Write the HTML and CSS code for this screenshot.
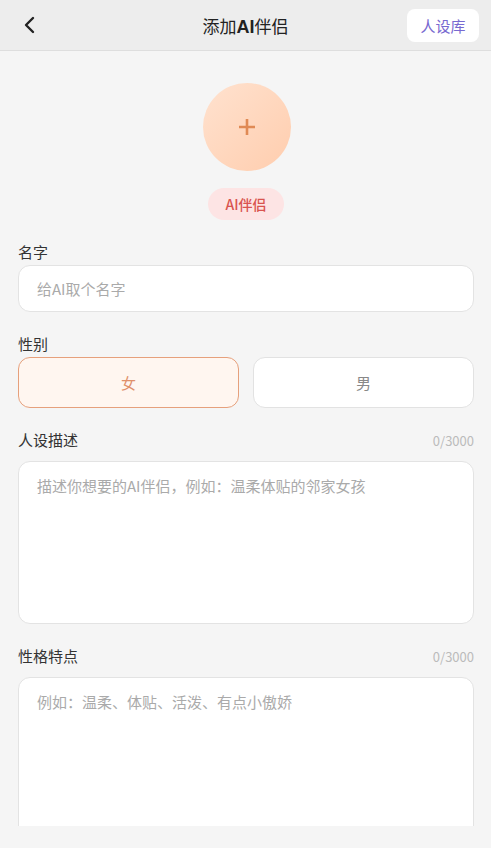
FILE: index.html
```html
<html>
<head>
    <meta charset="utf-8">
    <title>添加AI伴侣</title>
    <link rel="stylesheet" href="styles.css">
</head>
<body>
    <div class="header">
        <div class="back">
            <svg width="14" height="18" viewBox="0 0 14 18"><path d="M10 2 L3 9 L10 16" fill="none" stroke="#222" stroke-width="2.4" stroke-linecap="round" stroke-linejoin="round"/></svg>
        </div>
        <div class="title">添加<b>AI</b>伴侣</div>
        <div class="lib-btn">人设库</div>
    </div>

    <div class="content">
        <div class="avatar-box">
            <div class="avatar">
                <svg width="18" height="18" viewBox="0 0 18 18"><path d="M9 1 V17 M1 9 H17" stroke="#e08a55" stroke-width="2.6"/></svg>
            </div>
            <div class="badge">AI伴侣</div>
        </div>

        <div class="field">
            <div class="label">名字</div>
            <input class="text-input" type="text" placeholder="给AI取个名字">
        </div>

        <div class="field">
            <div class="label">性别</div>
            <div class="gender-row">
                <div class="gender active">女</div>
                <div class="gender">男</div>
            </div>
        </div>

        <div class="field">
            <div class="field-head">
                <div class="label">人设描述</div>
                <div class="count">0/3000</div>
            </div>
            <textarea class="area" placeholder="描述你想要的AI伴侣，例如：温柔体贴的邻家女孩"></textarea>
        </div>

        <div class="field">
            <div class="field-head">
                <div class="label">性格特点</div>
                <div class="count">0/3000</div>
            </div>
            <textarea class="area" placeholder="例如：温柔、体贴、活泼、有点小傲娇"></textarea>
        </div>
    </div>
</body>
</html>
```

FILE: styles.css
```css
* {
    margin: 0;
    box-sizing: border-box;
}
body {
    background-color: #f5f5f5;
    font-family: "Noto Sans CJK SC", "Noto Sans", sans-serif;
    color: #333;
    height: 848px;
    overflow: hidden;
}
.header {
    height: 51px;
    background-color: #ededed;
    border-bottom: 1px solid #dedede;
    display: flex;
    align-items: center;
    justify-content: space-between;
    padding: 0 12px 0 23px;
}
.back {
    width: 61px;
    display: flex;
    align-items: center;
}
.title {
    font-size: 17px;
    color: #222;
}
.title b {
    font-family: "Liberation Sans", Arial, sans-serif;
    font-weight: 700;
    font-size: 18px;
}
.lib-btn {
    width: 72px;
    height: 33px;
    background-color: #fff;
    border-radius: 8px;
    color: #7869d0;
    font-size: 15px;
    display: flex;
    align-items: center;
    justify-content: center;
}
.content {
    height: 775px;
    overflow: hidden;
    padding: 0 17px 0 18px;
}
.avatar-box {
    display: flex;
    flex-direction: column;
    align-items: center;
    padding-top: 32px;
}
.avatar {
    width: 88px;
    height: 88px;
    border-radius: 50%;
    background: linear-gradient(135deg, #ffe2cf, #ffcdae);
    display: flex;
    align-items: center;
    justify-content: center;
    margin-left: 1px;
}
.badge {
    margin-top: 17px;
    height: 32px;
    padding: 0 17px;
    border-radius: 16px;
    background-color: #fde4e4;
    color: #d9544f;
    font-size: 14px;
    font-weight: 500;
    display: flex;
    align-items: center;
}
.field {
    margin-top: 23px;
}
.label {
    font-size: 15px;
    line-height: 22px;
    color: #333;
}
.field > .label {
    margin-top: -2px;
    margin-bottom: 2px;
}
.field-head {
    display: flex;
    justify-content: space-between;
    align-items: center;
    height: 22px;
    margin-top: -2px;
    margin-bottom: 10px;
}
.count {
    font-size: 13px;
    color: #bbb;
}
.text-input {
    display: block;
    width: 100%;
    height: 47px;
    border: 1px solid #e3e3e3;
    border-radius: 12px;
    background-color: #fff;
    padding: 0 18px;
    font-family: inherit;
    font-size: 15px;
    outline: none;
}
.text-input::placeholder,
.area::placeholder {
    color: #aaa;
}
.gender-row {
    display: flex;
    gap: 14px;
}
.gender {
    flex: 1;
    height: 51px;
    border: 1.5px solid #e2e2e2;
    border-radius: 12px;
    background-color: #fff;
    color: #888;
    font-size: 15px;
    display: flex;
    align-items: center;
    justify-content: center;
}
.gender.active {
    border-color: #e6a07c;
    background-color: #fff6f0;
    color: #e0906a;
}
.area {
    display: block;
    width: 100%;
    height: 163px;
    border: 1px solid #e3e3e3;
    border-radius: 12px;
    background-color: #fff;
    padding: 13px 18px;
    font-family: inherit;
    font-size: 15px;
    line-height: 22px;
    resize: none;
    outline: none;
}
```
